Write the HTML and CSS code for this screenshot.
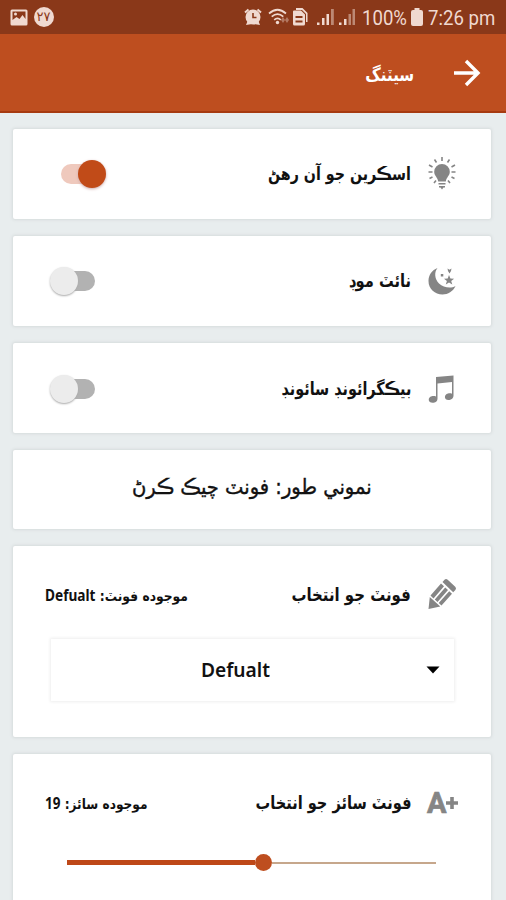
FILE: index.html
```html
<!DOCTYPE html>
<html lang="sd" dir="rtl">
<head>
<meta charset="utf-8">
<title>سيٽنگ</title>
<link rel="stylesheet" href="styles.css">
</head>
<body>
<header class="status" dir="ltr">
  <svg class="st-photo" width="18" height="17" viewBox="0 0 18 17"><path fill-rule="evenodd" d="M2 .5h14q1.500 0 1.500 1.500v13q0 1.500-1.500 1.500H2Q.5 16.500.5 15V2Q.5.500 2 .5zM2.500 2.500v8.500l4-3 3 2 3-4 3 4V2.500z"/><circle cx="5.500" cy="5" r="1.500"/></svg>
  <span class="st-badge">۲۷</span>
  <svg class="st-alarm" width="18" height="18" viewBox="0 0 18 18"><path class="bell" d="M1 4.500L4.500 1.500M17 4.500L13.500 1.500"/><circle cx="9" cy="9" r="7.500"/><path d="M2 17l2-5 4 4zM16 17l-2-5-4 4z"/><path class="cut" d="M9 5v4.500h3.500"/></svg>
  <svg class="st-wifi" width="22" height="18" viewBox="0 0 22 18"><g class="line"><path d="M1 5.500q8.500-7.500 17 0M3.700 8.700q5.800-5 11.600 0M6.200 11.800q3.300-2.800 6.600 0"/></g><circle cx="9.500" cy="14.500" r="1.700"/><path opacity=".4" d="M15 9l2 3-2 3-2-3zM19 9l2 3-2 3-2-3z"/></svg>
  <svg class="st-sim" width="16" height="18" viewBox="0 0 16 18"><path d="M4 0h6.500L15.500 5v9H14V6L10 2H4z"/><path fill-rule="evenodd" d="M1 3.500Q1 2.500 2 2.500h7L13 6.500v9.500q0 1.500-1.500 1.500h-9Q1 17.500 1 16zM3.500 8v2h7V8zM3.500 12.500v2h7v-2z"/></svg>
  <svg class="st-sig" width="40" height="18" viewBox="0 0 40 18"><path d="M1 14.500h2.500V17H1zM6 10h2.500v7H6zM10.500 6H13v11h-2.500zM23 14.500h2.500V17H23zM28 11h2.500v6H28z"/><path opacity=".5" d="M15 1h2.800v16H15zM32.500 6H35v11h-2.500zM36.500 1H39v16h-2.500z"/></svg>
  <span class="st-text st-pct">100%</span>
  <svg class="st-batt" width="12" height="18" viewBox="0 0 12 18"><path d="M3.500 0h5v2H10q2 0 2 2v12q0 2-2 2H2q-2 0-2-2V4q0-2 2-2h1.500z"/></svg>
  <span class="st-text st-time">7:26 pm</span>
</header>
<nav class="bar">
  <svg class="arrow" width="28" height="28" viewBox="0 0 28 28"><path d="M1 14h24M13 2l12 12-12 12"/></svg>
  <h1 class="title">سيٽنگ</h1>
</nav>
<main class="list">
  <section class="card row">
    <svg class="icon" width="30" height="34" viewBox="0 0 30 34"><path d="M15 7a7.800 7.800 0 0 0-7.800 7.800c0 4 3.500 5.700 4 9.700h7.600c.5-4 4-5.700 4-9.700A7.800 7.800 0 0 0 15 7zM11.500 26h7v1.500h-7zM12 29h6v1.500h-1.500L15 32.500 13.500 30.500H12z"/><path class="ray" d="M15 0v4M7.500 2.500l2 3M22.500 2.500l-2 3M2 8l3.500 2M28 8l-3.500 2M1.500 15h4M28.500 15h-4M2.500 21.500l3-1.500M27.500 21.500l-3-1.500M7 26l2-2.500M23 26l-2-2.500"/></svg>
    <span class="label w-screen">اسڪرين جو آن رهڻ</span>
    <span class="switch on"><i></i></span>
  </section>
  <section class="card row">
    <svg class="icon" width="30" height="34" viewBox="0 0 30 34"><path d="M10.500 4C7 8 7.500 15 12 19.500c4.500 4 11.500 5.500 16.500 2.500C26 27.500 21 30.500 15.500 30.500 8 30.500 1.500 25 1.500 17 1.500 11 5 6 10.500 4z"/><path d="M22 11l1.400 3.500 3.700.2-2.900 2.300 1.100 3.600L22 18.500l-3.200 2.100 1.100-3.600-2.900-2.300 3.700-.2zM20.500 4.500l2 1.200L24.500 4.500 24 7l-1.500 2.500L21 7zM13.800 10h2.500v2.500h-2.500z"/></svg>
    <span class="label w-night">نائٽ موڊ</span>
    <span class="switch"><i></i></span>
  </section>
  <section class="card row">
    <svg class="icon" width="30" height="34" viewBox="0 0 30 34"><path fill-rule="evenodd" d="M9 5L26.500 3.500v20c0 3-2.500 4.500-5 4.500-4.500 0-4.800-5.500-.5-6.500 1.500-.4 3-.2 4 .2V10L10.500 11.500v15c0 3-2.300 4.300-4.800 4.300-5 0-5.200-5.500-1-6.600 1.500-.4 3-.2 4.300.2z"/></svg>
    <span class="label w-sound">بيڪگرائونڊ سائونڊ</span>
    <span class="switch"><i></i></span>
  </section>
  <section class="card sample"><span class="sample-text">نموني طور: فونٽ چيڪ ڪرڻ</span></section>
  <section class="card font">
    <div class="head">
      <svg class="icon" width="30" height="34" viewBox="0 0 30 34"><path d="M17.500 2.800q1.500-1.500 3.200 0l7.500 7q1.600 1.600.2 3.200l-2.200 2.200L15.500 5zM14 6.500l3 2.700L6.500 21.500 3.500 18.500zM18.200 10.400l2.800 2.600L10.500 25l-2.700-2.400zM22.200 14.200l2.800 2.600L14.500 28.500l-2.800-2.400zM2.800 20l10.500 9.500L1.500 32z" transform="translate(0 -1)"/></svg>
      <span class="label w-font">فونٽ جو انتخاب</span>
      <span class="current w-cur-font">موجوده فونٽ: <bdi class="latin">Defualt</bdi></span>
    </div>
    <div class="select"><svg width="14" height="8" viewBox="0 0 14 8"><path d="M.5.500h13L7 7.500z"/></svg><span class="value">Defualt</span></div>
  </section>
  <section class="card size">
    <div class="head">
      <span class="icon-a" dir="ltr">A<svg width="12" height="12" viewBox="0 0 12 12"><path d="M4.200 0h3.600v4.200H12v3.600H7.800V12H4.200V7.800H0V4.200h4.200z"/></svg></span>
      <span class="label w-size">فونٽ سائز جو انتخاب</span>
      <span class="current w-cur-size">موجوده سائز: <bdi class="latin">19</bdi></span>
    </div>
    <div class="slider" dir="ltr"><span class="fill"></span><span class="thumb"></span><span class="rest"></span></div>
  </section>
</main>
</body>
</html>
```
FILE: styles.css
```css
* { box-sizing: border-box; }
body {
  margin: 0;
  width: 506px;
  height: 900px;
  overflow: hidden;
  background: #e8edee;
  font-family: "DejaVu Sans", sans-serif;
  color: #111;
}
svg { display: block; flex: none; }
.status {
  height: 34px;
  background: #8a3819;
  display: flex;
  align-items: center;
  padding-left: 9.5px;
  fill: #f0d9d0;
  color: #f0d9d0;
}
.st-badge {
  width: 20px;
  height: 20px;
  margin-left: 6px;
  border-radius: 50%;
  background: #f0d9d0;
  color: #8a3819;
  font-size: 13px;
  line-height: 20px;
  text-align: center;
}
.st-alarm { margin-left: 190px; }
.bell { fill: none; stroke: #f0d9d0; stroke-width: 2; }
.cut { fill: none; stroke: #8a3819; stroke-width: 1.6; }
.st-wifi { margin-left: 6px; }
.line { fill: none; stroke: #f0d9d0; stroke-width: 1.7; }
.st-sim { margin-left: 2px; }
.st-sig { margin-left: 8px; }
.st-text {
  font-family: Roboto, sans-serif;
  font-size: 20px;
  line-height: 34px;
  white-space: nowrap;
  transform-origin: left center;
  padding-top: 2px;
}
.st-pct { width: 44px; margin-left: 6px; transform: scaleX(.93); }
.st-batt { margin-left: 5px; }
.st-time { margin-left: 5px; transform: scaleX(.93); }
.bar {
  height: 79px;
  background: #be4e1f;
  border-bottom: 2px solid #a63a10;
  display: flex;
  align-items: center;
  padding-right: 25px;
}
.arrow { fill: none; stroke: #fff; stroke-width: 3.4; }
.title {
  margin: 3px 39px 0 0;
  color: #fff;
  font-size: 18px;
  white-space: nowrap;
  transform: scaleX(.84);
  transform-origin: right center;
}
.list {
  padding: 15.500px 15px 0 13px;
  display: flex;
  flex-direction: column;
  gap: 17px;
}
.card {
  flex: none;
  background: #fff;
  border-radius: 2px;
  box-shadow: 0 0 3px 1px #d6dbdc;
}
.row {
  height: 90.300px;
  display: flex;
  align-items: center;
  padding: 1px 34px 0 37px;
}
.icon { fill: #858585; }
.ray { stroke: #858585; stroke-width: 1.6; }
.label {
  font-weight: bold;
  font-size: 18px;
  line-height: 30px;
  white-space: nowrap;
  margin-right: 16px;
  transform-origin: right center;
}
.w-screen { transform: scaleX(.79); }
.w-night { transform: scaleX(.815); }
.w-sound { transform: scaleX(.8); }
.w-font { transform: scaleX(.83); }
.w-size { transform: scaleX(.81); }
.switch {
  position: relative;
  margin-right: auto;
  width: 56px;
  height: 28px;
  display: flex;
  align-items: center;
  justify-content: flex-end;
  padding-left: 11px;
}
.switch::before {
  content: "";
  width: 34px;
  height: 20px;
  border-radius: 10px;
  background: #b2b2b2;
}
.switch i {
  position: absolute;
  left: 0;
  width: 28px;
  height: 28px;
  border-radius: 50%;
  background: #ececec;
  box-shadow: 0 1px 2px #aaa;
}
.switch.on::before { background: #efc9bd; }
.switch.on i { left: 28px; background: #c14b18; box-shadow: 0 1px 3px #caa; }
.sample {
  height: 79px;
  display: flex;
  align-items: center;
  justify-content: center;
  padding-bottom: 5px;
}
.sample-text {
  font-size: 21px;
  white-space: nowrap;
  transform: scaleX(.93);
  -webkit-text-stroke: .4px #111;
}
.font { height: 191px; padding-top: 31.500px; }
.size { height: 170px; padding-top: 31.500px; }
.head { height: 34px; display: flex; align-items: center; padding: 0 34px 0 32px; }
.current {
  margin-right: auto;
  font-size: 14px;
  font-weight: bold;
  white-space: nowrap;
  transform-origin: left center;
}
.w-cur-font { transform: scaleX(.88); }
.w-cur-size { transform: scaleX(.87); }
.latin { font-family: "Noto Sans", sans-serif; font-size: 15.500px; }
.select {
  margin: 27px 37px 0 38px;
  height: 62px;
  background: #fff;
  box-shadow: 0 0 3px 1px #eee;
  display: flex;
  align-items: center;
  padding-right: 14px;
}
.value {
  font-family: "Noto Sans", sans-serif;
  font-weight: 600;
  font-size: 20px;
  margin-right: 156px;
  transform: scaleX(.96);
  transform-origin: right center;
}
.icon-a {
  width: 32px;
  margin-right: -2px;
  display: flex;
  align-items: center;
  font: bold 29px/34px Roboto, sans-serif;
  color: #858585;
  fill: #858585;
  -webkit-text-stroke: .7px #858585;
}
.slider { display: flex; align-items: center; height: 18px; margin: 34px 55px 0 54px; }
.fill { width: 188px; height: 5px; background: #be4818; }
.thumb { width: 17px; height: 17px; border-radius: 50%; background: #be4e1f; }
.rest { flex: 1; height: 2px; background: #c6a78c; }
```
